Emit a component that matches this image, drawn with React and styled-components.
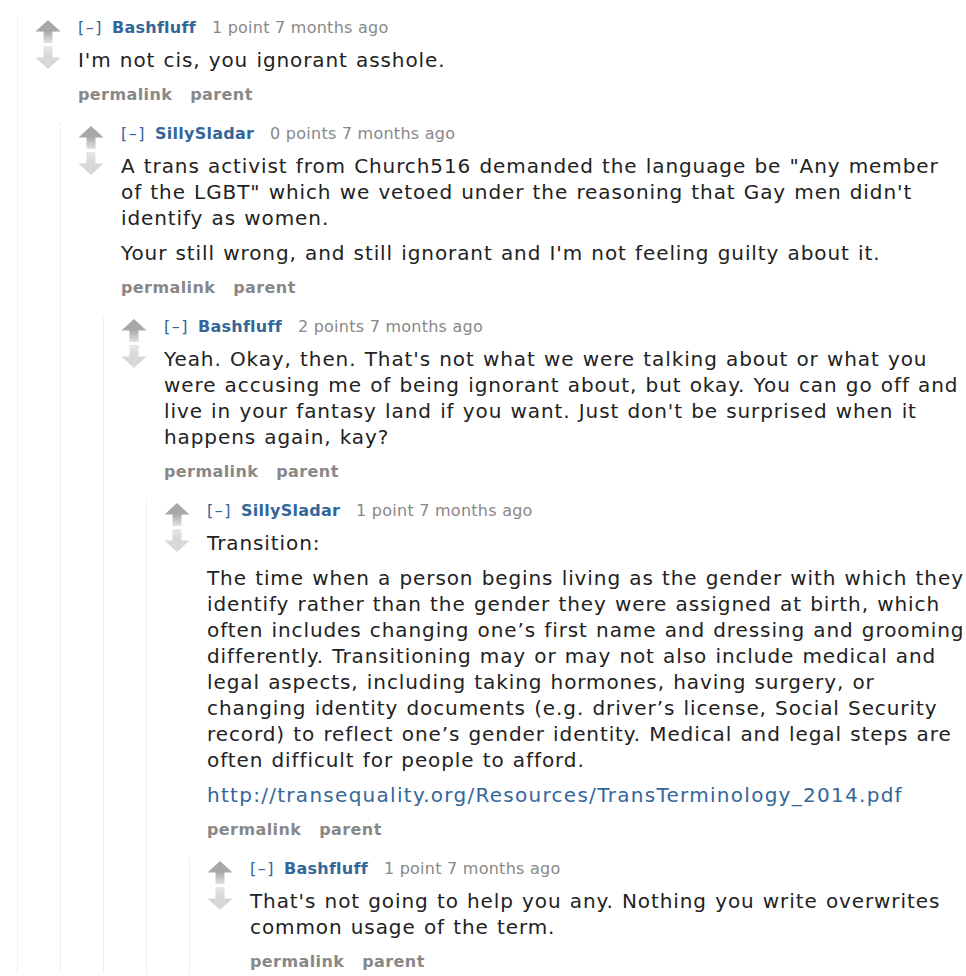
import React from "react";
import styled, { createGlobalStyle } from "styled-components";

const Global = createGlobalStyle`
	body {
		margin: 0;
		background: #fff;
		font-family: "DejaVu Sans", Verdana, sans-serif;
	}
`;

const Page = styled.div`
	padding: 0 0 0 17px;
	overflow: hidden;
`;

const CommentWrap = styled.div`
	border-left: 1px dotted #ddf;
	margin-top: 17px;
`;

const Entry = styled.div`
	display: flex;
	align-items: flex-start;
`;

const Midcol = styled.div`
	display: flex;
	flex-direction: column;
	align-items: center;
	gap: 3px;
	width: 26px;
	margin: 3px 17px 0 17px;
	flex-shrink: 0;
`;

const Main = styled.div`
	flex: 1;
	min-width: 0;
`;

const Tagline = styled.div`
	font-size: 16px;
	line-height: 22px;
	letter-spacing: 0.25px;
	color: #888;
`;

const Expand = styled.span`
	color: #369;
	letter-spacing: 1.5px;
	margin-right: 9px;
`;

const Author = styled.span`
	color: #369;
	font-weight: bold;
	margin-right: 16px;
`;

const Body = styled.div`
	margin-top: 8px;
	color: #222;
	font-size: 20px;
	line-height: 26px;
	letter-spacing: 0.9px;
	word-spacing: 1px;

	p {
		margin: 0 0 9px 0;
	}
	p:last-child {
		margin-bottom: 0;
	}
`;

const Link = styled.a`
	color: #369;
	text-decoration: none;
	letter-spacing: 1.28px;
`;

const Buttons = styled.div`
	display: flex;
	gap: 18px;
	margin-top: 11px;
	font-size: 16px;
	line-height: 22px;
	letter-spacing: 0.4px;
	font-weight: bold;
	color: #888;
`;

const Children = styled.div`
	margin-left: 42px;
`;

const Up = () => (
	<svg width="26" height="23" viewBox="0 0 26 23">
		<defs>
			<linearGradient id="upg" x1="0" y1="0" x2="0" y2="1">
				<stop offset="0" stopColor="#a8a8a8" />
				<stop offset="1" stopColor="#e2e2e2" />
			</linearGradient>
		</defs>
		<polygon points="13,0 25.5,11.5 0.5,11.5" fill="#a8a8a8" />
		<rect x="8.5" y="11" width="9" height="12" fill="url(#upg)" />
	</svg>
);

const Down = () => (
	<svg width="26" height="23" viewBox="0 0 26 23">
		<defs>
			<linearGradient id="downg" x1="0" y1="0" x2="0" y2="1">
				<stop offset="0" stopColor="#e6e6e6" />
				<stop offset="1" stopColor="#d6d6d6" />
			</linearGradient>
		</defs>
		<rect x="8.5" y="0" width="9" height="12" fill="url(#downg)" />
		<polygon points="0.5,11.5 25.5,11.5 13,23" fill="#d8d8d8" />
	</svg>
);

const Comment = ({ author, points, children, body }) => (
	<CommentWrap>
		<Entry>
			<Midcol>
				<Up />
				<Down />
			</Midcol>
			<Main>
				<Tagline>
					<Expand>[–]</Expand>
					<Author>{author}</Author>
					{points} 7 months ago
				</Tagline>
				<Body>{body}</Body>
				<Buttons>
					<span>permalink</span>
					<span>parent</span>
				</Buttons>
			</Main>
		</Entry>
		{children && <Children>{children}</Children>}
	</CommentWrap>
);

export default function App() {
	return (
		<>
			<Global />
			<Page>
				<Comment
					author="Bashfluff"
					points="1 point"
					body={<p>I'm not cis, you ignorant asshole.</p>}
				>
					<Comment
						author="SillySladar"
						points="0 points"
						body={
							<>
								<p>
									A trans activist from Church516 demanded the language be "Any member of
									the LGBT" which we vetoed under the reasoning that Gay men didn't
									identify as women.
								</p>
								<p>Your still wrong, and still ignorant and I'm not feeling guilty about it.</p>
							</>
						}
					>
						<Comment
							author="Bashfluff"
							points="2 points"
							body={
								<p>
									Yeah. Okay, then. That's not what we were talking about or what you were
									accusing me of being ignorant about, but okay. You can go off and live in
									your fantasy land if you want. Just don't be surprised when it happens
									again, kay?
								</p>
							}
						>
							<Comment
								author="SillySladar"
								points="1 point"
								body={
									<>
										<p>Transition:</p>
										<p>
											The time when a person begins living as the gender with which they
											identify rather than the gender they were assigned at birth, which
											often includes changing one’s first name and dressing and grooming
											differently. Transitioning may or may not also include medical and
											legal aspects, including taking hormones, having surgery, or
											changing identity documents (e.g. driver’s license, Social Security
											record) to reflect one’s gender identity. Medical and legal steps are
											often difficult for people to afford.
										</p>
										<p>
											<Link href="#">
												http://transequality.org/Resources/TransTerminology_2014.pdf
											</Link>
										</p>
									</>
								}
							>
								<Comment
									author="Bashfluff"
									points="1 point"
									body={
										<p>
											That's not going to help you any. Nothing you write overwrites
											common usage of the term.
										</p>
									}
								/>
							</Comment>
						</Comment>
					</Comment>
				</Comment>
			</Page>
		</>
	);
}
